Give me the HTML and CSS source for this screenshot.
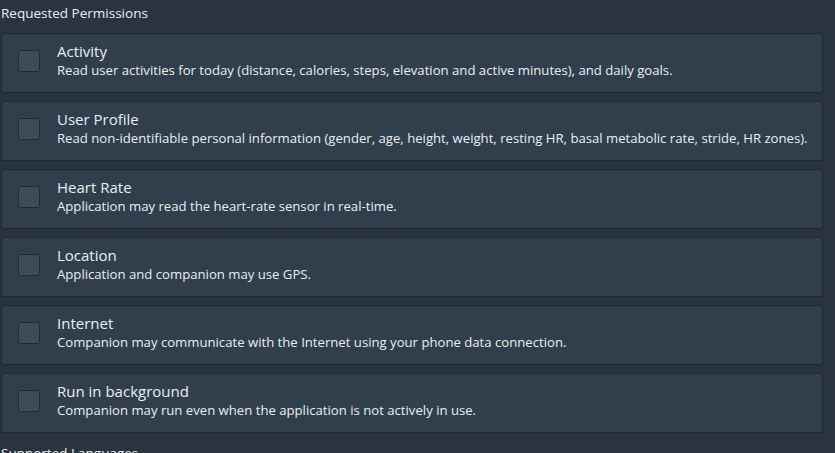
FILE: index.html
```html
<!DOCTYPE html>
<html>
<head>
<meta charset="utf-8">
<link rel="stylesheet" href="styles.css">
</head>
<body>
<div class="page">
  <div class="section-title">Requested Permissions</div>
  <div class="perm-list">
    <div class="perm">
      <span class="check"></span>
      <div class="perm-text">
        <div class="perm-name">Activity</div>
        <div class="perm-desc">Read user activities for today (distance, calories, steps, elevation and active minutes), and daily goals.</div>
      </div>
    </div>
    <div class="perm">
      <span class="check"></span>
      <div class="perm-text">
        <div class="perm-name">User Profile</div>
        <div class="perm-desc">Read non-identifiable personal information (gender, age, height, weight, resting HR, basal metabolic rate, stride, HR zones).</div>
      </div>
    </div>
    <div class="perm">
      <span class="check"></span>
      <div class="perm-text">
        <div class="perm-name">Heart Rate</div>
        <div class="perm-desc">Application may read the heart-rate sensor in real-time.</div>
      </div>
    </div>
    <div class="perm">
      <span class="check"></span>
      <div class="perm-text">
        <div class="perm-name">Location</div>
        <div class="perm-desc">Application and companion may use GPS.</div>
      </div>
    </div>
    <div class="perm">
      <span class="check"></span>
      <div class="perm-text">
        <div class="perm-name">Internet</div>
        <div class="perm-desc">Companion may communicate with the Internet using your phone data connection.</div>
      </div>
    </div>
    <div class="perm">
      <span class="check"></span>
      <div class="perm-text">
        <div class="perm-name">Run in background</div>
        <div class="perm-desc">Companion may run even when the application is not actively in use.</div>
      </div>
    </div>
  </div>
  <div class="section-title next">Supported Languages</div>
</div>
</body>
</html>
```
FILE: styles.css
```css
html, body {
  margin: 0;
  padding: 0;
  background: #2a3440;
  height: 100%;
  overflow: hidden;
}
.page {
  font-family: "Open Sans", "Liberation Sans", sans-serif;
  color: #e9eef2;
  padding: 0 12px 0 1px;
}
.section-title {
  font-size: 13.5px;
  line-height: 18px;
  padding-top: 4px;
  height: 33px;
  box-sizing: border-box;
}
.section-title.next {
  padding-top: 11px;
}
.perm-list {
  display: flex;
  flex-direction: column;
  gap: 8px;
}
.perm {
  display: flex;
  align-items: flex-start;
  height: 60px;
  box-sizing: border-box;
  background: #313f4c;
  border: 1px solid #1f2831;
  border-radius: 3px;
  padding-left: 16px;
}
.check {
  width: 20px;
  height: 20px;
  flex: none;
  background: #3e4c5a;
  border: 1px solid #222b35;
  border-radius: 3px;
  margin-top: 16px;
  margin-right: 17px;
}
.perm-text {
  display: flex;
  flex-direction: column;
  padding-top: 7px;
}
.perm-name {
  font-size: 15px;
  line-height: 20px;
}
.perm-desc {
  font-size: 13.15px;
  line-height: 19px;
}
```
